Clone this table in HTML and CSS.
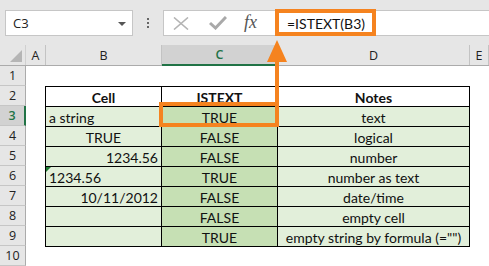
FILE: index.html
```html
<!DOCTYPE html>
<html>
<head>
<meta charset="utf-8">
<link rel="stylesheet" href="styles.css">
</head>
<body>
<div class="app">
  <div class="toolbar">
    <div class="namebox"><span class="nb-text">C3</span><span class="dd"></span></div>
    <div class="grip"><i></i><i></i><i></i></div>
    <div class="fbar">
      <div class="ficons">
        <svg class="ic-x" width="18" height="13" viewBox="0 0 18 13"><path d="M2 0.5 L16 12.5 M16 0.5 L2 12.5" stroke="#b4b4b4" stroke-width="1.6" fill="none"/></svg>
        <svg class="ic-check" width="18" height="14" viewBox="0 0 18 14"><path d="M1 7 L6.5 12 L17 1" stroke="#a9a9a9" stroke-width="3" fill="none"/></svg>
        <span class="fx">fx</span>
      </div>
      <div class="finput">=ISTEXT(B3)</div>
    </div>
  </div>

  <div class="colheads">
    <div class="ch corner"><span class="tri"></span></div>
    <div class="ch ca">A</div>
    <div class="ch cb">B</div>
    <div class="ch cc sel">C</div>
    <div class="ch cd">D</div>
    <div class="ch ce">E</div>
  </div>

  <div class="body">
    <div class="rowheads">
      <div class="rh">1</div>
      <div class="rh">2</div>
      <div class="rh sel">3</div>
      <div class="rh">4</div>
      <div class="rh">5</div>
      <div class="rh">6</div>
      <div class="rh">7</div>
      <div class="rh">8</div>
      <div class="rh">9</div>
      <div class="rh">10</div>
    </div>
    <div class="sheet">
      <div class="tbl">
        <div class="c hd">Cell</div><div class="c hd">ISTEXT</div><div class="c hd">Notes</div>

        <div class="c b left">a string</div><div class="c k">TRUE</div><div class="c b">text</div>
        <div class="c b">TRUE</div><div class="c k">FALSE</div><div class="c b">logical</div>
        <div class="c b right">1234.56</div><div class="c k">FALSE</div><div class="c b">number</div>
        <div class="c b left flag">1234.56</div><div class="c k">TRUE</div><div class="c b">number as text</div>
        <div class="c b right">10/11/2012</div><div class="c k">FALSE</div><div class="c b">date/time</div>
        <div class="c b"></div><div class="c k">FALSE</div><div class="c b">empty cell</div>
        <div class="c b"></div><div class="c k">TRUE</div><div class="c b">empty string by formula (="")</div>
      </div>
    </div>
  </div>

  <svg class="overlay" width="489" height="266" viewBox="0 0 489 266">
    <rect x="277" y="11" width="97" height="23" fill="none" stroke="#f5831f" stroke-width="4"/>
    <rect x="161" y="104" width="116" height="21" fill="none" stroke="#f5831f" stroke-width="4"/>
    <rect x="275" y="60" width="4" height="43" fill="#f5831f"/>
    <polygon points="277,40 287,62 267,62" fill="#f5831f"/>
  </svg>
</div>
</body>
</html>
```

FILE: styles.css
```css
* { box-sizing: border-box; margin: 0; padding: 0; }
html, body { width: 489px; height: 266px; overflow: hidden; background: #e6e6e6; }
body { font-family: "Lato", "Liberation Sans", sans-serif; }

.app { position: relative; width: 489px; height: 266px; }

.toolbar {
  height: 45px;
  padding: 10px 0 0 5px;
  display: flex;
  align-items: flex-start;
}
.namebox {
  width: 128px;
  height: 26px;
  background: #fff;
  border: 1px solid #c6c6c6;
  display: flex;
  align-items: center;
  justify-content: space-between;
  padding: 0 6px 0 7px;
  font-family: "Open Sans", sans-serif;
  font-size: 13px;
  color: #222;
}
.dd {
  width: 0; height: 0;
  border-left: 4px solid transparent;
  border-right: 4px solid transparent;
  border-top: 4px solid #555;
  margin-top: 2px;
}
.grip {
  width: 30px;
  height: 26px;
  display: flex;
  flex-direction: column;
  align-items: center;
  justify-content: center;
  gap: 2px;
}
.grip i { display: block; width: 2px; height: 2px; background: #666; }

.fbar {
  flex: 1;
  height: 26px;
  background: #fff;
  border: 1px solid #c6c6c6;
  border-right: none;
  display: flex;
  align-items: center;
}
.ficons {
  display: flex;
  align-items: center;
  padding-left: 8px;
  width: 111px;
}
.ic-x { margin-right: 19px; }
.ic-check { margin-right: 17px; margin-top: -1px; }
.fx {
  font-family: "Liberation Serif", serif;
  font-style: italic;
  font-size: 18px;
  color: #555;
  line-height: 1;
  margin-top: -2px;
}
.finput {
  padding-left: 12px;
  font-family: "Lato", sans-serif;
  font-size: 14px;
  color: #111;
}

.colheads {
  display: grid;
  grid-template-columns: 26px 20px 116px 116px 192px 1fr;
  height: 21px;
  border-bottom: 1px solid #ababab;
}
.ch {
  border-right: 1px solid #c3c3c3;
  display: flex;
  align-items: center;
  justify-content: center;
  font-family: "Open Sans", sans-serif;
  font-size: 12.5px;
  color: #222;
  background: #e6e6e6;
}
.ch.corner { position: relative; border-right-color: #d0d0d0; }
.tri {
  position: absolute;
  right: 3px; bottom: 3px;
  width: 0; height: 0;
  border-left: 12px solid transparent;
  border-bottom: 12px solid #b5b5b5;
}
.ch.sel {
  background: #d2d2d2;
  color: #217346;
  font-weight: 600;
  border-bottom: 2px solid #217346;
  margin-bottom: -1px;
}

.body { display: flex; height: 200px; }
.rowheads { width: 26px; display: flex; flex-direction: column; }
.rh {
  height: 20px;
  flex: none;
  border-right: 1px solid #ababab;
  border-bottom: 1px solid #c6c6c6;
  display: flex;
  align-items: center;
  justify-content: center;
  font-family: "Open Sans", sans-serif;
  font-size: 12.5px;
  color: #222;
}
.rh.sel {
  background: #d2d2d2;
  color: #217346;
  font-weight: 600;
  border-right: 2px solid #217346;
}

.sheet {
  flex: 1;
  background: #fff;
  padding: 20px 0 0 19px;
}
.tbl {
  display: grid;
  grid-template-columns: 117px 116px 192px;
  grid-auto-rows: 20px;
  width: 425px;
  border-top: 1px solid #000;
}
.c {
  border-right: 1px solid #000;
  border-bottom: 1px solid #000;
  display: flex;
  align-items: center;
  justify-content: center;
  font-size: 14px;
  color: #111;
  padding: 1px 3px 0;
  white-space: nowrap;
  position: relative;
}
.c:nth-child(3n+1) { border-left: 1px solid #000; }
.c.hd { background: #fff; font-weight: 700; }
.c.b { background: #e2efda; }
.c.k { background: #c6e0b4; }
.c.left { justify-content: flex-start; }
.c.right { justify-content: flex-end; }
.c.flag::before {
  content: "";
  position: absolute;
  left: 0; top: 0;
  border-top: 5px solid #1e7d32;
  border-right: 5px solid transparent;
}

.overlay { position: absolute; left: 0; top: 0; pointer-events: none; }
```
